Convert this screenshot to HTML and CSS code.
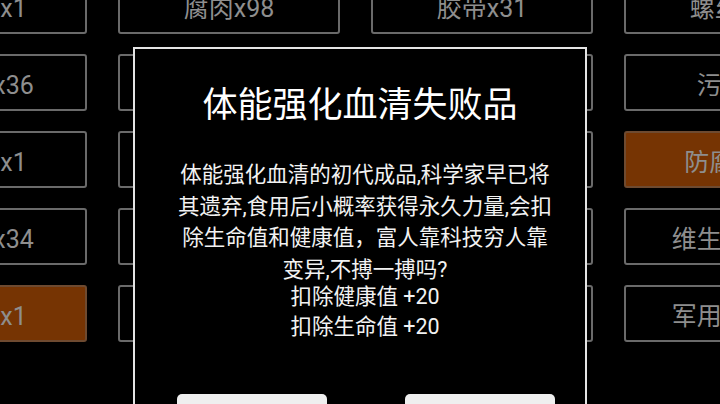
FILE: index.html
```html
<!DOCTYPE html>
<html lang="zh-CN">
<head>
<meta charset="utf-8">
<link rel="stylesheet" href="styles.css">
</head>
<body>
<div class="screen">
  <div class="grid">
    <div class="cell">止血带x1</div>
    <div class="cell">腐肉x98</div>
    <div class="cell">胶带x31</div>
    <div class="cell">螺丝x23</div>

    <div class="cell">破布条x36</div>
    <div class="cell">木材x12</div>
    <div class="cell">铁片x8</div>
    <div class="cell">污水x4</div>

    <div class="cell">绷带包x1</div>
    <div class="cell">电池x3</div>
    <div class="cell">零件x6</div>
    <div class="cell selected">防腐剂x3</div>

    <div class="cell">净水片x34</div>
    <div class="cell">罐头x2</div>
    <div class="cell">药草x5</div>
    <div class="cell">维生素片x1</div>

    <div class="cell selected">抗生素x1</div>
    <div class="cell">汽油x1</div>
    <div class="cell">布料x9</div>
    <div class="cell">军用罐头x2</div>
  </div>

  <div class="dialog">
    <h1 class="title">体能强化血清失败品</h1>
    <p class="desc">体能强化血清的初代成品,科学家早已将<br>其遗弃,食用后小概率获得永久力量,会扣<br>除生命值和健康值，富人靠科技穷人靠<br>变异,不搏一搏吗?</p>
    <p class="effects">扣除健康值 +20<br>扣除生命值 +20</p>
    <div class="actions">
      <div class="btn"></div>
      <div class="btn"></div>
    </div>
  </div>
</div>
</body>
</html>
```

FILE: styles.css
```css
html, body {
  margin: 0;
  padding: 0;
  background: #000;
}

.screen {
  position: relative;
  width: 720px;
  height: 404px;
  overflow: hidden;
  background: #000;
  font-family: Roboto, "Noto Sans CJK SC", sans-serif;
}

.grid {
  display: grid;
  grid-template-columns: repeat(4, 222px);
  grid-auto-rows: 57px;
  column-gap: 31px;
  row-gap: 20px;
  margin: -23px 0 0 -135px;
}

.cell {
  box-sizing: border-box;
  border: 2px solid #6a6a6a;
  border-radius: 3px;
  display: flex;
  align-items: center;
  justify-content: center;
  color: #8e8e8e;
  font-size: 25px;
  white-space: nowrap;
}

.cell.selected {
  background: #763403;
  border-color: #6e4a30;
}

.dialog {
  position: absolute;
  left: 133px;
  top: 47px;
  width: 454px;
  height: 400px;
  box-sizing: border-box;
  border: 2px solid #e4e4e4;
  background: #000;
  display: flex;
  flex-direction: column;
  align-items: center;
  color: #fff;
}

.title {
  margin: 37px 0 0 0;
  font-size: 35px;
  line-height: 40px;
  font-weight: 400;
  color: #fff;
}

.desc {
  margin: 33px 0 0 0;
  padding-left: 10px;
  font-size: 21.5px;
  line-height: 31.5px;
  text-align: center;
  color: #f2f2f2;
}

.effects {
  margin: -3px 0 0 0;
  padding-left: 10px;
  font-size: 21.5px;
  line-height: 30px;
  text-align: center;
  color: #f2f2f2;
}

.actions {
  display: flex;
  justify-content: space-between;
  width: 378px;
  margin: 52px 0 0 12px;
}

.btn {
  width: 150px;
  height: 50px;
  background: #efefef;
  border-radius: 5px;
}
```
